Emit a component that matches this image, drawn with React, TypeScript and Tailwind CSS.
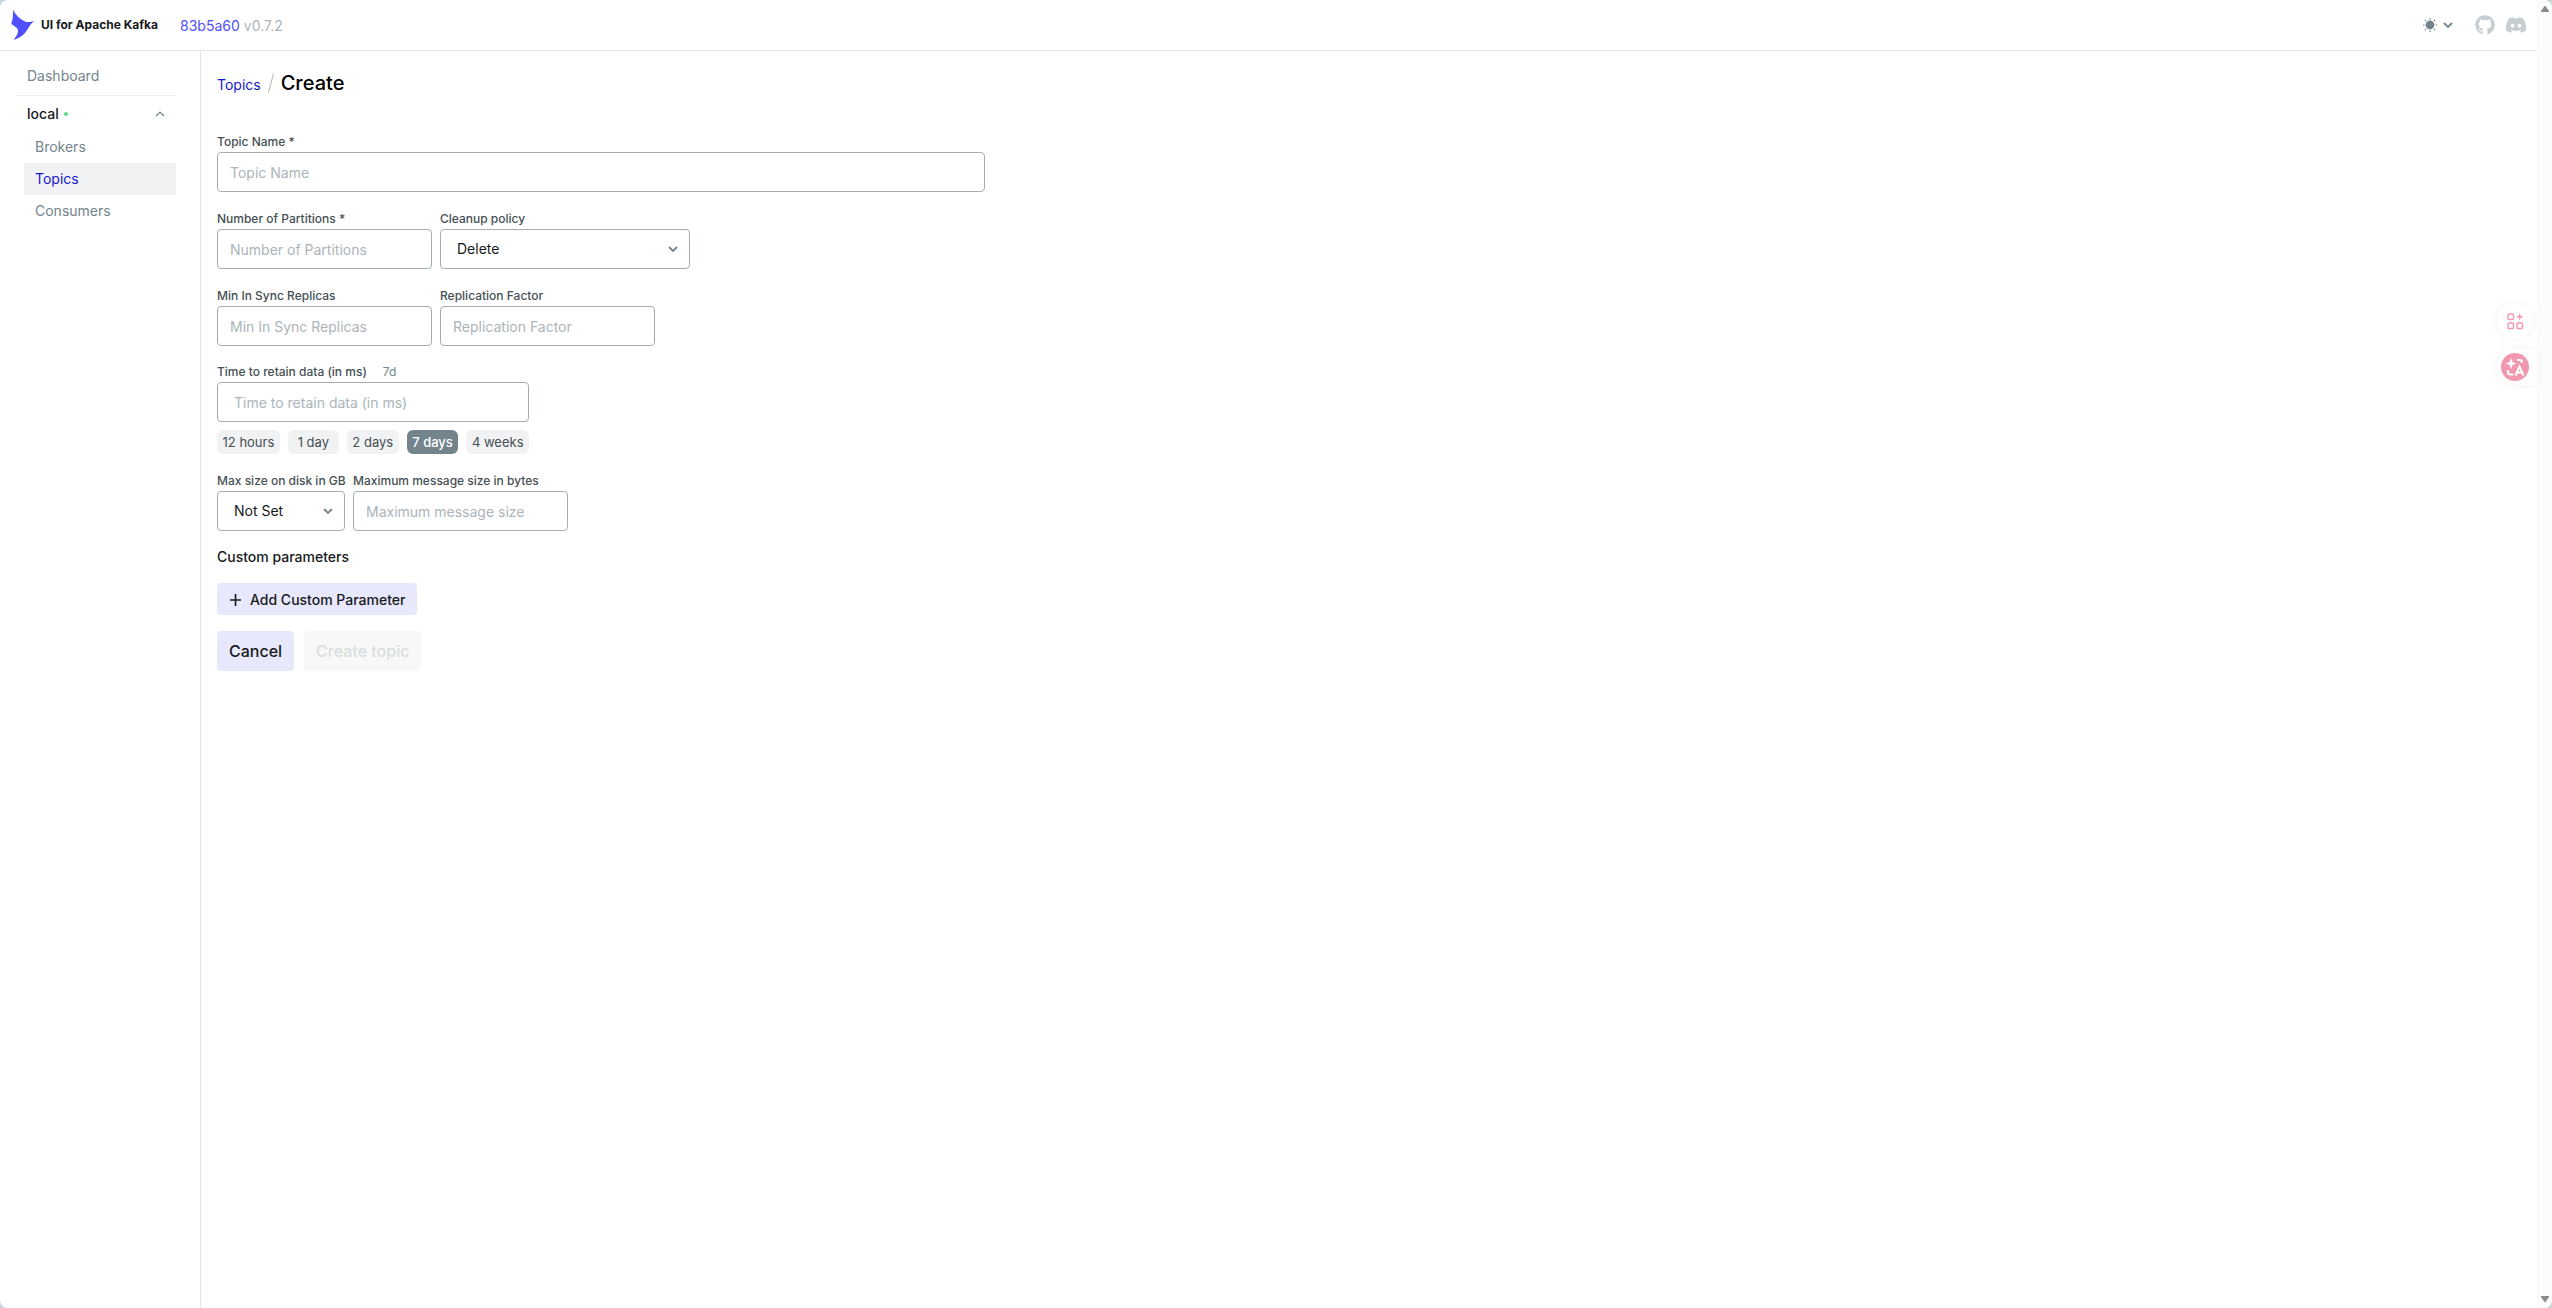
import { useState } from "react";
import { FaDiscord, FaGithub } from "react-icons/fa";

const INPUT =
  "h-10 rounded-[4px] border border-[#a3aeb4] bg-white px-3 text-sm text-[#171a1c] placeholder:text-[#abb5ba] outline-none";
const LABEL = "block h-[21px] whitespace-nowrap text-xs leading-[22px] font-medium text-[#454f54]";

const periods = ["12 hours", "1 day", "2 days", "7 days", "4 weeks"];

function Chevron({ className = "" }: { className?: string }) {
  return (
    <svg width="10" height="6" viewBox="0 0 10 6" fill="none" className={className}>
      <path d="M1 1l4 4 4-4" stroke="#73848c" strokeWidth="1.8" />
    </svg>
  );
}

function TextField({ id, label, placeholder, className }: { id: string; label: string; placeholder: string; className: string }) {
  return (
    <div>
      <label htmlFor={id} className={LABEL}>{label}</label>
      <input id={id} placeholder={placeholder} className={`${INPUT} ${className}`} />
    </div>
  );
}

function SelectField({ id, label, options, className }: { id: string; label: string; options: string[]; className: string }) {
  return (
    <div className={className}>
      <label htmlFor={id} className={LABEL}>{label}</label>
      <div className="relative">
        <select id={id} className="block h-10 w-full appearance-none rounded-[4px] border border-[#a3aeb4] bg-white px-4 text-sm text-[#171a1c] outline-none">
          {options.map((o) => <option key={o}>{o}</option>)}
        </select>
        <Chevron className="pointer-events-none absolute top-[17px] right-3" />
      </div>
    </div>
  );
}

function Header() {
  return (
    <header className="flex h-[51px] shrink-0 items-center justify-between border-b border-[#e3e6e8] pr-[10px] pl-[11px]">
      <div className="flex items-center">
        <a href="#" className="flex items-center gap-[7px] text-xs font-bold text-[#171a1c]">
          <svg width="23" height="30" viewBox="0 0 23 30" fill="#4f4fff">
            <path d="M2 0c3 5 7 9.500 12 11.500 3 1 6 .5 9-.5-3 3-4.500 5-6.500 8.500-3 5-7.500 8.500-14 10.500 2.500-3 5-7 4.500-9.500C6.500 17 2.500 16 .3 13.500 2 10 2 5 2 0z" />
          </svg>
          UI for Apache Kafka
        </a>
        <div className="ml-[22px] flex gap-1 pt-px text-sm">
          <a href="#" className="text-[#4f4fff]">83b5a60</a>
          <span className="text-[#abb5ba]">v0.7.2</span>
        </div>
      </div>
      <div className="flex items-center">
        <button type="button" aria-label="Theme" className="mr-[22px] flex items-center gap-[6px]">
          <svg width="14" height="14" viewBox="0 0 14 14" fill="#73848c">
            <circle cx="7" cy="7" r="4.4" />
            <path d="M7 0v1.4M7 12.6V14M0 7h1.4M12.6 7H14M2 2l1 1M11 11l1 1M2 12l1-1M11 3l1-1" stroke="#73848c" strokeWidth="1.2" />
          </svg>
          <Chevron />
        </button>
        <a href="#" aria-label="GitHub" className="mr-[10px]"><FaGithub size={20} color="#c7ced1" /></a>
        <a href="#" aria-label="Discord"><FaDiscord size={22} color="#c7ced1" /></a>
      </div>
    </header>
  );
}

function Sidebar() {
  return (
    <nav className="w-[201px] shrink-0 border-r border-[#e3e6e8] pt-[9px] pr-6 pl-4 text-sm text-[#73848c]">
      <a href="#" className="flex h-8 items-center px-[11px]">Dashboard</a>
      <hr className="mt-[3px] border-[#f1f2f3]" />
      <button type="button" className="flex h-[35px] w-full items-center px-[11px] text-[#171a1c]">
        <span className="font-medium">local</span>
        <span className="ml-[5px] size-1 rounded-full bg-[#5cd685]" />
        <svg width="10" height="6" viewBox="0 0 10 6" fill="none" className="ml-auto">
          <path d="M1 5l4-4 4 4" stroke="#73848c" strokeWidth="1.2" />
        </svg>
      </button>
      <ul className="ml-2">
        <li><a href="#" className="flex h-8 items-center px-[11px]">Brokers</a></li>
        <li><a href="#" className="flex h-8 items-center bg-[#f1f2f3] px-[11px] text-[#1717cf]">Topics</a></li>
        <li><a href="#" className="flex h-8 items-center px-[11px]">Consumers</a></li>
      </ul>
    </nav>
  );
}

function TopicForm() {
  const [period, setPeriod] = useState("7 days");

  return (
    <form className="flex flex-col items-start gap-4 px-4 pt-6">
      <TextField id="name" label="Topic Name *" placeholder="Topic Name" className="w-[768px]" />
      <div className="flex gap-2">
        <TextField id="partitions" label="Number of Partitions *" placeholder="Number of Partitions" className="w-[215px]" />
        <SelectField id="cleanup" label="Cleanup policy" options={["Delete", "Compact", "Compact,Delete"]} className="w-[250px]" />
      </div>
      <div className="flex gap-2">
        <TextField id="insync" label="Min In Sync Replicas" placeholder="Min In Sync Replicas" className="w-[215px]" />
        <TextField id="replication" label="Replication Factor" placeholder="Replication Factor" className="w-[215px]" />
      </div>
      <div className="w-[312px]">
        <div className="flex h-5 items-center gap-4 text-xs">
          <label htmlFor="retention" className="font-medium text-[#454f54]">Time to retain data (in ms)</label>
          <span className="text-[#73848c]">7d</span>
        </div>
        <input id="retention" placeholder="Time to retain data (in ms)" className={`${INPUT} block w-full pl-4`} />
        <div className="mt-2 flex gap-2">
          {periods.map((p) => (
            <button
              key={p}
              type="button"
              onClick={() => setPeriod(p)}
              className={`h-6 min-w-[51px] grow rounded-md px-[5px] pt-px text-[13px] ${p === period ? "bg-[#73848c] font-medium text-white" : "bg-[#f1f2f3] text-[#454f54]"}`}
            >
              {p}
            </button>
          ))}
        </div>
      </div>
      <div className="flex gap-2">
        <SelectField id="disk" label="Max size on disk in GB" options={["Not Set", "1 GB", "10 GB", "20 GB", "50 GB"]} className="w-32" />
        <TextField id="message" label="Maximum message size in bytes" placeholder="Maximum message size" className="w-[215px]" />
      </div>
      <h2 className="text-sm leading-5 font-medium text-[#171a1c]">Custom parameters</h2>
      <button type="button" className="flex h-8 items-center gap-2 rounded-[4px] bg-[#e8e8fc] px-3 pt-px text-sm font-medium text-[#171a1c]">
        <svg width="13" height="12" viewBox="0 0 13 12">
          <path d="M6.500 0v12M1 6h11" stroke="#171a1c" strokeWidth="1.6" />
        </svg>
        Add Custom Parameter
      </button>
      <div className="flex gap-[10px]">
        <button type="button" className="h-10 rounded-[4px] bg-[#e8e8fc] px-3 text-base font-medium text-[#171a1c]">Cancel</button>
        <button type="submit" disabled className="h-10 rounded-[4px] bg-[#f8f8f8] px-3 text-base font-medium text-[#d9dee0]">Create topic</button>
      </div>
    </form>
  );
}

// floating shortcuts stuck to the right edge of the window
function FloatingTools() {
  return (
    <div className="fixed top-[303px] right-[15px] flex w-10 flex-col gap-[10px]">
      <button type="button" aria-label="Tools" className="flex size-9 items-center justify-center rounded-full bg-white shadow-[0_0_8px_rgba(0,0,0,0.06)]">
        <svg width="18" height="18" viewBox="0 0 18 18" fill="none" stroke="#f297b0" strokeWidth="1.4">
          <rect x="2" y="2" width="5.5" height="5.5" rx="1" />
          <rect x="2" y="11" width="5.5" height="5.5" rx="1" />
          <rect x="11" y="11" width="5.5" height="5.5" rx="1" />
          <path d="M13.700 1l1 2.800 2.800 1-2.800 1-1 2.800-1-2.800-2.800-1 2.800-1z" fill="#f297b0" stroke="none" />
        </svg>
      </button>
      <button type="button" aria-label="Translate" className="flex h-9 w-full items-center rounded-l-full bg-white pl-1 shadow-[0_0_8px_rgba(0,0,0,0.06)]">
        <svg width="28" height="28" viewBox="0 0 28 28" fill="none">
          <circle cx="14" cy="14" r="14" fill="#f297b0" />
          <path d="M10 5l1.500 4 4 1.500-4 1.500-1.500 4-1.500-4-4-1.500 4-1.500z" fill="#fff" />
          <path d="M16 7h3q2 0 2 3M7 17v2q0 2.500 2.500 2.500h3M14.500 22.500l4-9 4 9M16 19.500h5" stroke="#fff" strokeWidth="2" />
        </svg>
      </button>
    </div>
  );
}

function Scrollbar() {
  return (
    <div className="flex w-[15px] shrink-0 flex-col items-center justify-between rounded-r-lg bg-[#fcfcfc] py-[6px]">
      <svg width="8" height="6" viewBox="0 0 8 6" fill="#8b8b8b"><path d="M3.500 0h1L8 5v1H0V5z" /></svg>
      <svg width="8" height="6" viewBox="0 0 8 6" fill="#8b8b8b"><path d="M3.500 6h1L8 1V0H0v1z" /></svg>
    </div>
  );
}

export default function App() {
  return (
    <div className="bg-[#c9d8de] font-[Inter,sans-serif]">
      <div className="flex min-h-screen overflow-hidden rounded-lg bg-white">
        <div className="flex min-w-0 flex-1 flex-col">
          <Header />
          <div className="flex flex-1">
            <Sidebar />
            <main className="flex-1">
              <div className="flex h-14 items-center px-4 pt-2">
                <a href="#" className="pt-1 text-sm text-[#1717cf]">Topics</a>
                <svg width="6" height="20" viewBox="0 0 6 20" className="mx-[7px]">
                  <path d="M5.500 0.500l-5 19" stroke="#abb5ba" />
                </svg>
                <h1 className="text-xl font-medium text-black">Create</h1>
              </div>
              <TopicForm />
            </main>
          </div>
        </div>
        <Scrollbar />
      </div>
      <FloatingTools />
    </div>
  );
}
